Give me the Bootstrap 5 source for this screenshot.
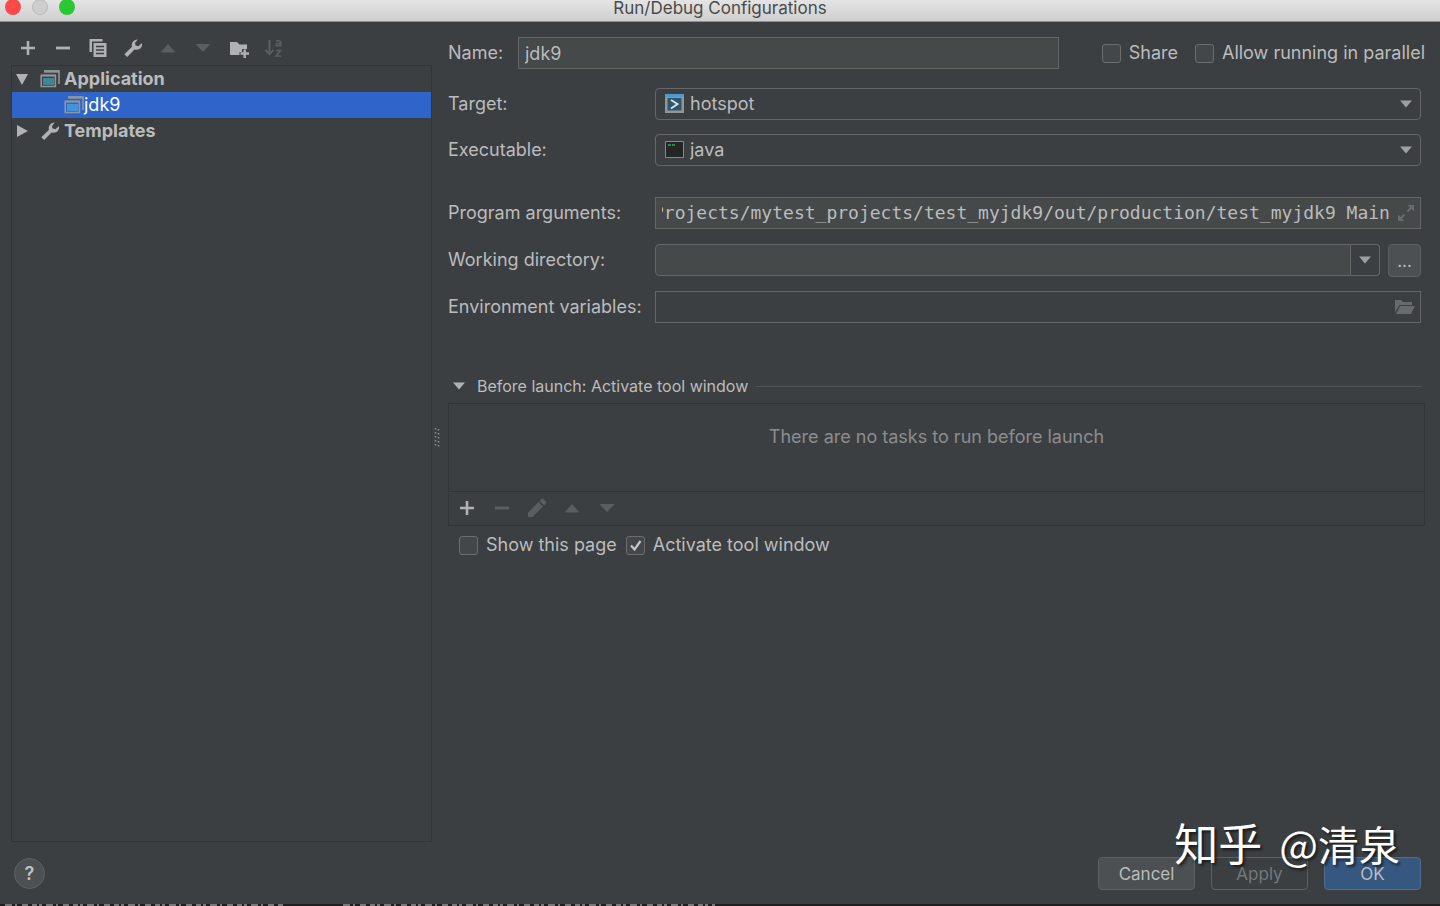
<!DOCTYPE html>
<html lang="en">
<head>
<meta charset="utf-8">
<meta name="viewport" content="width=device-width, initial-scale=1">
<title>Run/Debug Configurations</title>
<link rel="stylesheet" href="https://cdn.jsdelivr.net/npm/bootstrap@5.3.0/dist/css/bootstrap.min.css">
<style>
:root { --ui-bg: #3c3f41; --ui-field: #45494a; --ui-line: #646668; --ui-dark: #323537; --ui-text: #bbbcbd; --ui-off: #5b5e60; }
body { background: var(--ui-bg); color: var(--ui-text); font-family: Inter, "Liberation Sans", sans-serif; font-size: 18px; line-height: 24px; }
svg { display: block; flex: none; }
.title-bar { height: 22px; background: linear-gradient(#e4e4e4, #cfcfcf); border-bottom: 1px solid #8d8f90; color: #4a4a4a; font-size: 17px; line-height: 17px; }
.lights { left: 5px; top: -1px; gap: 11px; }
.light { width: 16px; height: 16px; border-radius: 50%; border: 0; padding: 0; }
.light-close { background: #fc4a48; }
.light-min { background: #cdcdcd; border: 1px solid #bababa; }
.light-zoom { background: #29c732; }
.side { width: 30%; padding-left: 11px; }
.tools { height: 43px; padding: 16px 0 0 7px; gap: 15px; }
.tool { background: none; border: 0; padding: 0; color: #afb1b3; width: 20px; height: 20px; }
.tool:disabled { color: var(--ui-off); }
.tree { border: 1px solid var(--ui-dark); }
.tree-row { height: 26px; color: var(--ui-text); text-decoration: none; padding-left: 4px; }
.tree-row.picked { background: #2f65ca; color: #fff; padding-left: 52px; }
.grip { width: 16px; color: #8c8e90; padding-top: 12px; }
.main-pane { padding: 15px 15px 0 0; }
.head-row, .field-row { height: 32px; }
.name-label { width: 70px; }
.name-box { width: 541px; }
.share-label { margin-right: 17px; }
.inset-end { margin-right: 4px; }
.field-label { width: 207px; flex: none; }
.target-row { margin-top: 19px; }
.exec-row { margin-top: 14px; }
.args-row { margin-top: 31px; }
.stack-row { margin-top: 15px; }
.ui-field { background: var(--ui-field); border: 1px solid var(--ui-line); color: var(--ui-text); height: 32px; padding: 0 6px; border-radius: 0; outline-offset: 0; }
.ui-pick { background: var(--ui-bg); border-radius: 4px; appearance: none; padding-left: 34px; }
.ui-combo { border-radius: 4px 0 0 4px; }
.ui-drop { background: var(--ui-bg); border: 1px solid var(--ui-line); border-left: 0; border-radius: 0 4px 4px 0; width: 29px; height: 32px; padding: 0; color: #9da0a2; }
.ui-args { font-family: "DejaVu Sans Mono", monospace; padding: 0 30px 2px 6px; }
.ui-env { background: var(--ui-bg); }
.over-start { left: 10px; top: 6px; pointer-events: none; }
.over-end { right: 6px; top: 6px; color: #686b6d; pointer-events: none; }
.caret { color: #9da0a2; right: 9px; top: 12px; pointer-events: none; }
.ui-btn { --bs-btn-color: var(--ui-text); --bs-btn-bg: #4c5052; --bs-btn-border-color: #5e6162; --bs-btn-hover-color: #fff; --bs-btn-hover-bg: #55595b; --bs-btn-hover-border-color: #6e7173; --bs-btn-disabled-color: #75787a; --bs-btn-disabled-bg: var(--ui-bg); --bs-btn-disabled-border-color: #5e6162; --bs-btn-disabled-opacity: 1; --bs-btn-padding-x: 0; --bs-btn-padding-y: 0; --bs-btn-font-size: 17px; --bs-btn-line-height: 32px; --bs-btn-border-radius: 4px; height: 33px; }
.ui-btn-main { --bs-btn-bg: #365880; --bs-btn-border-color: #4c708c; }
.foot-btn { width: 97px; }
.dots-btn { width: 33px; margin-left: 8px; }
.ui-check { appearance: none; width: 19px; height: 19px; margin: 0 8px 0 0; background: #43474a; border: 1px solid #6b6d6f; border-radius: 3px; grid-area: 1 / 1; }
.check-wrap { display: grid; }
.check-wrap svg { grid-area: 1 / 1; margin: 2px; pointer-events: none; }
.launch-head { font-size: 16px; margin: 51px 4px 0 0; }
.fold { background: none; border: 0; padding: 0 8px 0 5px; color: #afb1b3; }
.rule { height: 1px; background: #515456; }
.tasks { border: 1px solid var(--ui-dark); margin-top: 5px; }
.tasks-empty { height: 88px; padding-top: 21px; color: #8b8d8f; border-bottom: 1px solid var(--ui-dark); }
.tasks-tools { height: 33px; padding: 6px 0 0 8px; gap: 15px; }
.options { padding: 7px 0 0 11px; gap: 9px; }
.foot { height: 62px; padding: 0 19px 0 14px; }
.help { width: 31px; height: 31px; border-radius: 50%; background: #4c5052; border: 1px solid #5e6162; color: #c0c2c3; padding: 0; font-weight: 600; line-height: 29px; }
.behind { height: 2px; background: #1e1f21; }
.signature { right: 40px; bottom: 31px; gap: 17px; font: 44px/64px "Noto Sans CJK SC", sans-serif; color: #fff; text-shadow: 2px 2px 3px rgba(0,0,0,.65); pointer-events: none; }
.signature-name { font-size: 41px; }
</style>
</head>
<body>
<svg class="d-none">
  <symbol id="i-plus" viewBox="0 0 20 20"><path d="M3 10h14M10 3v14" stroke="currentColor" stroke-width="2.6"/></symbol>
  <symbol id="i-minus" viewBox="0 0 20 20"><path d="M3 10h14" stroke="currentColor" stroke-width="2.8"/></symbol>
  <symbol id="i-up" viewBox="0 0 20 20"><path d="M2.500 14.500h15L10 6z" fill="currentColor"/></symbol>
  <symbol id="i-down" viewBox="0 0 20 20"><path d="M2.500 6h15L10 14z" fill="currentColor"/></symbol>
  <symbol id="i-wrench" viewBox="0 0 20 20"><path d="M1.300 16.300 9 8.800C8 5.500 10 1.500 14.800 1.400L12 5l.6 2.600 2.800.7L19 5c.8 5-3.300 7.700-7.500 6.400L4.200 19z" fill="currentColor"/></symbol>
  <symbol id="i-app" viewBox="0 0 20 18"><path d="M4 1h15v13" fill="none" stroke="#8e979d" stroke-width="1.600"/><path d="M4 1.500h15" stroke="#8e979d" stroke-width="2.400"/><path d="M1.200 5.500h14.200v11H1.200z" fill="none" stroke="#8e979d" stroke-width="1.600"/><path d="M1 5.500h15" stroke="#8e979d" stroke-width="2"/><path d="M3 8h11v7H3z" fill="currentColor"/></symbol>
  <symbol id="i-caret" viewBox="0 0 12 8"><path d="M0 .5h12L6 7.500z" fill="currentColor"/></symbol>
</svg>

<div class="d-flex flex-column vh-100 position-relative overflow-hidden">
  <header class="title-bar position-relative text-center">
    <div class="lights position-absolute d-flex">
      <button class="light light-close" aria-label="Close"></button>
      <button class="light light-min" aria-label="Minimize" disabled></button>
      <button class="light light-zoom" aria-label="Zoom"></button>
    </div>
    Run/Debug Configurations
  </header>

  <div class="d-flex flex-grow-1">
    <aside class="side d-flex flex-column flex-shrink-0">
      <div class="tools d-flex">
        <button class="tool" aria-label="Add"><svg width="20" height="20"><use href="#i-plus"/></svg></button>
        <button class="tool" aria-label="Remove"><svg width="20" height="20"><use href="#i-minus"/></svg></button>
        <button class="tool" aria-label="Copy"><svg width="20" height="20" viewBox="0 0 20 20"><path d="M1.500 1h13v2.500H4V14H1.500z" fill="currentColor"/><path d="M5.500 5h13v14h-13z" fill="currentColor"/><path d="M8 8.500h8M8 12h8M8 15.500h8" stroke="#3c3f41" stroke-width="1.500"/></svg></button>
        <button class="tool" aria-label="Edit templates"><svg width="20" height="20"><use href="#i-wrench"/></svg></button>
        <button class="tool" aria-label="Move up" disabled><svg width="20" height="20"><use href="#i-up"/></svg></button>
        <button class="tool" aria-label="Move down" disabled><svg width="20" height="20"><use href="#i-down"/></svg></button>
        <button class="tool" aria-label="New folder"><svg width="22" height="20" viewBox="0 0 20 20"><path d="M1 4h7l2.500 2.500H18V11h-5v3h-2.500v3H1z" fill="currentColor"/><path d="M11.500 15.500h8.500M15.700 11.500v8.500" stroke="currentColor" stroke-width="2.400"/></svg></button>
        <button class="tool" aria-label="Sort" disabled><svg width="22" height="20" viewBox="0 0 20 20"><path d="M5.500 2v13M1.500 12l4 4 4-4" fill="none" stroke="currentColor" stroke-width="2"/><path d="M12 3.200c2-1 4.700-.7 4.700 1.300v4M16.500 5.500c-3-.2-4.700.5-4.500 1.600.3 1.300 3.500 1.200 4.500-.3M12 12.500h4.500L12 18h5" fill="none" stroke="currentColor" stroke-width="1.700"/></svg></button>
      </div>
      <nav class="tree flex-grow-1" aria-label="Configurations">
        <a href="#" class="tree-row d-flex align-items-center fw-bold"><svg width="12" height="11" viewBox="0 0 12 11"><path d="M0 0h12L6 11z" fill="#afb1b3"/></svg><svg class="ms-2 me-1 ps-1" width="24" height="18" color="#3f8793"><use href="#i-app"/></svg>Application</a>
        <a href="#" class="tree-row picked d-flex align-items-center"><svg width="20" height="18" color="#3d95dd"><use href="#i-app"/></svg>jdk9</a>
        <a href="#" class="tree-row d-flex align-items-center fw-bold"><svg width="12" height="12" viewBox="0 0 12 12"><path d="M1 0v12L12 6z" fill="#afb1b3"/></svg><svg class="ms-2 me-1 ps-1" width="24" height="20" color="#afb1b3"><use href="#i-wrench"/></svg>Templates</a>
      </nav>
    </aside>

    <div class="grip d-flex align-items-center"><svg width="10" height="20" viewBox="0 0 10 20"><path d="M3.500 0v20M6.500 1v19" stroke="currentColor" stroke-width="1.500" stroke-dasharray="1.500 2.500"/></svg></div>

    <main class="main-pane flex-grow-1">
      <div class="head-row d-flex align-items-center">
        <label class="name-label flex-shrink-0" for="name">Name:</label>
        <input id="name" class="ui-field name-box flex-shrink-1" value="jdk9">
        <div class="d-flex align-items-center ms-auto text-nowrap">
          <input type="checkbox" class="ui-check" id="share"><label for="share" class="share-label">Share</label>
          <input type="checkbox" class="ui-check" id="par"><label for="par">Allow running in parallel</label>
        </div>
      </div>

      <div class="inset-end">
        <div class="field-row target-row d-flex align-items-center">
          <label class="field-label" for="target">Target:</label>
          <div class="position-relative flex-grow-1">
            <select id="target" class="ui-field ui-pick w-100"><option>hotspot</option></select>
            <svg class="over-start position-absolute" width="19" height="19" viewBox="0 0 19 19"><path d="M0 0h19v19H0z" fill="#8f979c"/><path d="M0 0h19v3H0z" fill="#4f9bc8"/><path d="M2.500 4h14v12.500h-14z" fill="#2f566c"/><path d="M6 6l6.500 4L6 14.500" fill="none" stroke="#d9e6ee" stroke-width="1.800"/></svg>
            <svg class="caret position-absolute" width="12" height="8"><use href="#i-caret"/></svg>
          </div>
        </div>
        <div class="field-row exec-row d-flex align-items-center">
          <label class="field-label" for="exec">Executable:</label>
          <div class="position-relative flex-grow-1">
            <select id="exec" class="ui-field ui-pick w-100"><option>java</option></select>
            <svg class="over-start position-absolute" width="19" height="19" viewBox="0 0 19 19"><path d="M.5 1.500h18v16H.5z" fill="#222625" stroke="#86898b"/><path d="M3 5h3M7 5h3" stroke="#3fa35c" stroke-width="1.300"/></svg>
            <svg class="caret position-absolute" width="12" height="8"><use href="#i-caret"/></svg>
          </div>
        </div>
        <div class="field-row args-row d-flex align-items-center">
          <label class="field-label" for="args">Program arguments:</label>
          <div class="position-relative flex-grow-1">
            <input id="args" class="ui-field ui-args w-100" spellcheck="false" value="Projects/mytest_projects/test_myjdk9/out/production/test_myjdk9 Main">
            <svg class="over-end position-absolute" width="18" height="20" viewBox="0 0 18 20"><path d="M10.500 2H17v6.500zM1 11.500V18h6.500z" fill="currentColor"/><path d="M15 4l-4.500 4.500M3 16l4.500-4.500" stroke="currentColor" stroke-width="1.800"/></svg>
          </div>
        </div>
        <div class="field-row stack-row d-flex align-items-center">
          <label class="field-label" for="dir">Working directory:</label>
          <input id="dir" class="ui-field ui-combo flex-grow-1">
          <button class="ui-drop d-flex align-items-center justify-content-center" aria-label="Recent directories"><svg width="12" height="8"><use href="#i-caret"/></svg></button>
          <button class="btn ui-btn dots-btn" aria-label="Browse">...</button>
        </div>
        <div class="field-row stack-row d-flex align-items-center">
          <label class="field-label" for="env">Environment variables:</label>
          <div class="position-relative flex-grow-1">
            <input id="env" class="ui-field ui-env w-100">
            <svg class="over-end position-absolute" width="21" height="20" viewBox="0 0 21 20"><path d="M1 3h6l2 2h9v3H5.500L1 15z" fill="currentColor"/><path d="M6 9h15l-4 8H2z" fill="currentColor"/></svg>
          </div>
        </div>
      </div>

      <div class="launch-head d-flex align-items-center">
        <button class="fold" aria-label="Collapse"><svg width="12" height="8"><use href="#i-caret"/></svg></button>
        <span class="ps-1">Before launch: Activate tool window</span>
        <div class="rule flex-grow-1 ms-2"></div>
      </div>
      <section class="tasks">
        <div class="tasks-empty text-center">There are no tasks to run before launch</div>
        <div class="tasks-tools d-flex">
          <button class="tool" aria-label="Add task"><svg width="20" height="20"><use href="#i-plus"/></svg></button>
          <button class="tool" aria-label="Remove task" disabled><svg width="20" height="20"><use href="#i-minus"/></svg></button>
          <button class="tool" aria-label="Edit task" disabled><svg width="20" height="20" viewBox="0 0 20 20"><path d="M1 19v-4.500L11.500 4 16 8.500 5.500 19zM12.500 3l2-2c.5-.5 1.300-.5 1.800 0L19 3.500c.5.500.5 1.200 0 1.700l-2 2z" fill="currentColor"/></svg></button>
          <button class="tool" aria-label="Task up" disabled><svg width="20" height="20"><use href="#i-up"/></svg></button>
          <button class="tool" aria-label="Task down" disabled><svg width="20" height="20"><use href="#i-down"/></svg></button>
        </div>
      </section>
      <div class="options d-flex">
        <div class="d-flex align-items-center"><input type="checkbox" class="ui-check" id="show"><label for="show">Show this page</label></div>
        <div class="d-flex align-items-center"><span class="check-wrap"><input type="checkbox" class="ui-check" id="act" checked><svg width="15" height="15" viewBox="0 0 15 15"><path d="M3 7.500l3.500 4L12.500 3" fill="none" stroke="#c4c6c7" stroke-width="2.200"/></svg></span><label for="act">Activate tool window</label></div>
      </div>
    </main>
  </div>

  <footer class="foot d-flex align-items-center">
    <button class="help" aria-label="Help">?</button>
    <div class="d-flex gap-3 ms-auto">
      <button class="btn ui-btn foot-btn">Cancel</button>
      <button class="btn ui-btn foot-btn" disabled>Apply</button>
      <button class="btn ui-btn ui-btn-main foot-btn">OK</button>
    </div>
  </footer>
  <div class="behind"><svg width="720" height="2"><path d="M5 1h278M343 1h372" stroke="#77797b" stroke-width="2" stroke-dasharray="7 3 2 5 6 4 5 2 3 4"/></svg></div>
  <div class="signature position-absolute d-flex align-items-baseline" lang="zh"><span>知乎</span><span class="signature-name">@清泉</span></div>
</div>

<script src="https://cdn.jsdelivr.net/npm/bootstrap@5.3.0/dist/js/bootstrap.bundle.min.js"></script>
<script>
// Keep the end of a long argument line in view
const args = document.getElementById('args');
args.scrollLeft = args.scrollWidth;
</script>
</body>
</html>
